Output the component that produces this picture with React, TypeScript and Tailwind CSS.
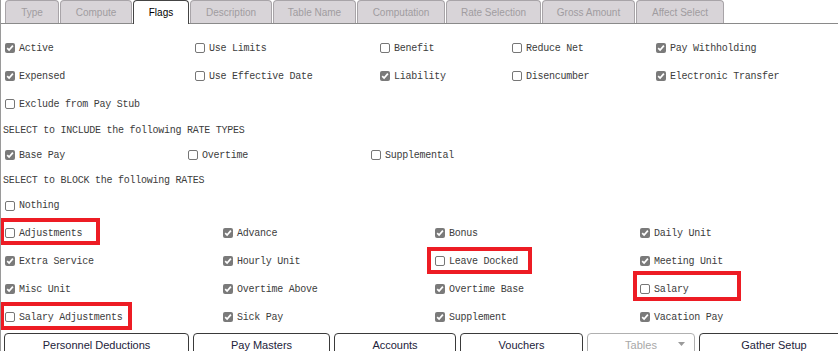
import React from "react"

const tabs = [
  { name: "Type", w: "w-[54px]" },
  { name: "Compute", w: "w-[72px]" },
  { name: "Flags", w: "w-[56px]", active: true },
  { name: "Description", w: "w-[82px]" },
  { name: "Table Name", w: "w-[83px]" },
  { name: "Computation", w: "w-[88px]" },
  { name: "Rate Selection", w: "w-[95px]" },
  { name: "Gross Amount", w: "w-[93px]" },
  { name: "Affect Select", w: "w-[88px]" },
]

type Item = { label: string; on: boolean }

function Box({ on }: { on: boolean }) {
  if (on) {
    return (
      <span className="w-[10px] h-[10px] rounded-[2px] bg-[#7a7a7a] flex items-center justify-center shrink-0">
        <svg width="8" height="8" viewBox="0 0 8 8">
          <path d="M1.2 4.2 L3.1 6.1 L6.9 1.6" stroke="white" strokeWidth="1.7" fill="none" />
        </svg>
      </span>
    )
  }
  return <span className="w-[10px] h-[10px] rounded-[2px] border border-[#767676] bg-white shrink-0" />
}

function Check({ item, w }: { item: Item; w?: string }) {
  return (
    <div className={`flex items-center gap-[4px] ${w ?? ""}`}>
      <Box on={item.on} />
      <span className="whitespace-nowrap">{item.label}</span>
    </div>
  )
}

function Row({ h, items, widths }: { h: string; items: Item[]; widths: string[] }) {
  return (
    <div className={`flex items-center pl-[4px] ${h}`}>
      {items.map((it, i) => (
        <Check key={it.label} item={it} w={widths[i]} />
      ))}
    </div>
  )
}

const topW = ["w-[190px]", "w-[185px]", "w-[132px]", "w-[144px]", ""]
const incW = ["w-[183px]", "w-[183px]", ""]
const blockW = ["w-[218px]", "w-[212px]", "w-[205px]", ""]

const buttons = [
  { name: "Personnel Deductions", w: "w-[185px]" },
  { name: "Pay Masters", w: "w-[137px]" },
  { name: "Accounts", w: "w-[122px]" },
  { name: "Vouchers", w: "w-[123px]" },
]

export default function App() {
  return (
    <div className="relative w-[838px] h-[351px] overflow-hidden bg-white border-l border-[#9a9a9a]">
      <div className="flex items-end gap-px h-[24px] pl-[4px] border-b border-[#8a8a8a] font-['Liberation_Sans',Arial,sans-serif] text-[10px]">
        {tabs.map((t) =>
          t.active ? (
            <div
              key={t.name}
              className={`${t.w} h-[24px] -mb-px rounded-t-[4px] border border-b-0 border-[#444] bg-white text-black flex items-center justify-center`}
            >
              {t.name}
            </div>
          ) : (
            <div
              key={t.name}
              className={`${t.w} h-[23px] rounded-t-[4px] border border-b-0 border-[#a8a4a8] bg-[#d8d4d8] text-[#a09ca0] flex items-center justify-center`}
            >
              {t.name}
            </div>
          )
        )}
      </div>

      <div className="mt-[10px] font-['Liberation_Mono','Courier_New',monospace] text-[10px] tracking-[-0.25px] text-[#3c3c3c]">
        <Row
          h="h-[28px]"
          widths={topW}
          items={[
            { label: "Active", on: true },
            { label: "Use Limits", on: false },
            { label: "Benefit", on: false },
            { label: "Reduce Net", on: false },
            { label: "Pay Withholding", on: true },
          ]}
        />
        <Row
          h="h-[28px]"
          widths={topW}
          items={[
            { label: "Expensed", on: true },
            { label: "Use Effective Date", on: false },
            { label: "Liability", on: true },
            { label: "Disencumber", on: false },
            { label: "Electronic Transfer", on: true },
          ]}
        />
        <Row h="h-[28px]" widths={topW} items={[{ label: "Exclude from Pay Stub", on: false }]} />
        <div className="h-[24px] flex items-center pl-[2px]">SELECT to INCLUDE the following RATE TYPES</div>
        <Row
          h="h-[26px]"
          widths={incW}
          items={[
            { label: "Base Pay", on: true },
            { label: "Overtime", on: false },
            { label: "Supplemental", on: false },
          ]}
        />
        <div className="h-[24px] flex items-center pl-[2px]">SELECT to BLOCK the following RATES</div>
        <Row h="h-[27px]" widths={blockW} items={[{ label: "Nothing", on: false }]} />
        <Row
          h="h-[28px]"
          widths={blockW}
          items={[
            { label: "Adjustments", on: false },
            { label: "Advance", on: true },
            { label: "Bonus", on: true },
            { label: "Daily Unit", on: true },
          ]}
        />
        <Row
          h="h-[28px]"
          widths={blockW}
          items={[
            { label: "Extra Service", on: true },
            { label: "Hourly Unit", on: true },
            { label: "Leave Docked", on: false },
            { label: "Meeting Unit", on: true },
          ]}
        />
        <Row
          h="h-[28px]"
          widths={blockW}
          items={[
            { label: "Misc Unit", on: true },
            { label: "Overtime Above", on: true },
            { label: "Overtime Base", on: true },
            { label: "Salary", on: false },
          ]}
        />
        <Row
          h="h-[28px]"
          widths={blockW}
          items={[
            { label: "Salary Adjustments", on: false },
            { label: "Sick Pay", on: true },
            { label: "Supplement", on: true },
            { label: "Vacation Pay", on: true },
          ]}
        />
      </div>

      <div className="mt-[2px] flex gap-[4px] pl-[3px] font-['Liberation_Sans',Arial,sans-serif] text-[11px]">
        {buttons.map((b) => (
          <div
            key={b.name}
            className={`${b.w} h-[24px] shrink-0 rounded-[4px] border border-[#3a3a3a] bg-white text-[#22223a] flex items-center justify-center`}
          >
            {b.name}
          </div>
        ))}
        <div className="w-[108px] h-[24px] shrink-0 rounded-[4px] border border-[#b0b0b0] bg-white text-[#a8a8a8] flex items-center justify-center relative">
          Tables
          <svg className="absolute right-[9px] top-[8px]" width="7" height="4" viewBox="0 0 7 4">
            <path d="M0 0 L7 0 L3.5 4 Z" fill="#9a9a9a" />
          </svg>
        </div>
        <div className="w-[150px] h-[24px] shrink-0 rounded-[4px] border border-[#3a3a3a] bg-white text-[#22223a] flex items-center justify-center">
          Gather Setup
        </div>
      </div>

      {/* red annotation boxes */}
      <div className="absolute left-[-1px] top-[218px] w-[100px] h-[27px] border-[4px] border-[#ed1c24]" />
      <div className="absolute left-[426px] top-[247px] w-[105px] h-[27px] border-[4px] border-[#ed1c24]" />
      <div className="absolute left-[632px] top-[271px] w-[108px] h-[30px] border-[4px] border-[#ed1c24]" />
      <div className="absolute left-[-1px] top-[302px] w-[132px] h-[28px] border-[4px] border-[#ed1c24]" />
    </div>
  )
}
